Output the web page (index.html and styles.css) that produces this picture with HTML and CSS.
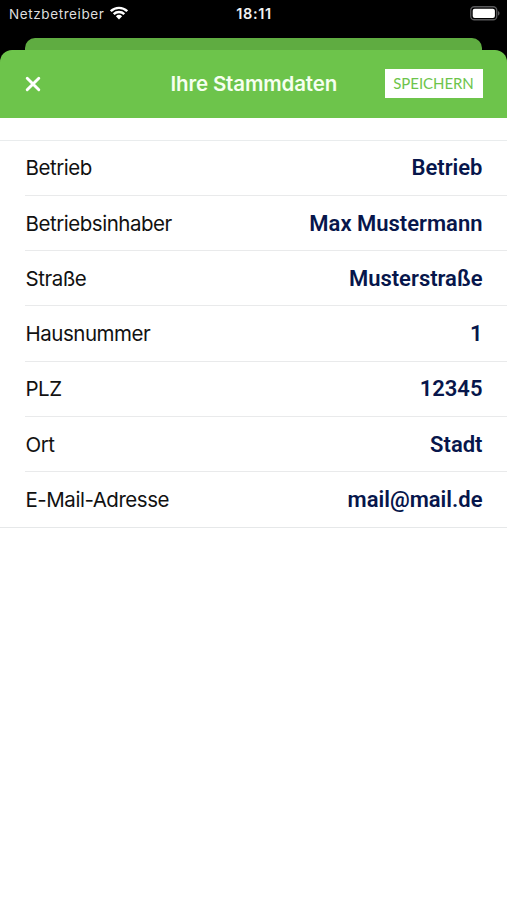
FILE: index.html
```html
<!DOCTYPE html>
<html lang="de">
<head>
<meta charset="utf-8">
<title>Ihre Stammdaten</title>
<link rel="stylesheet" href="styles.css">
</head>
<body>
<div class="status">
  <div class="carrier"><span>Netzbetreiber</span>
    <svg class="wifi" width="18" height="14" viewBox="0 0 18 14" fill="none" stroke="#fff" stroke-width="2.4"><path d="M.8 5.2a11.7 11.7 0 0 1 16.4 0M3.7 8.2a7.6 7.6 0 0 1 10.6 0"/><path d="M9 13.4 5.9 10.3a4.5 4.5 0 0 1 6.2 0z" fill="#fff" stroke="none"/></svg>
  </div>
  <time class="clock">18:11</time>
  <svg class="battery" width="30" height="15" viewBox="0 0 30 15"><rect x=".75" y=".75" width="26" height="13" rx="3.6" fill="none" stroke="#59595b" stroke-width="1.3"/><rect x="2.7" y="2.7" width="22.2" height="9.2" rx="2" fill="#fff"/><path d="M28 5v4.6c2-.8 2-3.8 0-4.6z" fill="#59595b"/></svg>
</div>
<div class="behind"></div>
<main class="sheet">
  <header class="bar">
    <svg class="close" width="16" height="16" viewBox="0 0 16 16" fill="none" stroke="#fff" stroke-width="2.9" stroke-linecap="round"><path d="M2.2 2.2l11.6 11.6M13.8 2.2L2.2 13.8"/></svg>
    <h1>Ihre Stammdaten</h1>
    <button class="save">SPEICHERN</button>
  </header>
  <dl class="list">
    <div class="row"><dt>Betrieb</dt><dd>Betrieb</dd></div>
    <div class="row"><dt>Betriebsinhaber</dt><dd>Max Mustermann</dd></div>
    <div class="row"><dt>Straße</dt><dd>Musterstraße</dd></div>
    <div class="row"><dt>Hausnummer</dt><dd>1</dd></div>
    <div class="row"><dt>PLZ</dt><dd>12345</dd></div>
    <div class="row"><dt>Ort</dt><dd>Stadt</dd></div>
    <div class="row"><dt>E-Mail-Adresse</dt><dd>mail@mail.de</dd></div>
  </dl>
</main>
</body>
</html>
```
FILE: styles.css
```css
* { box-sizing: border-box; }
body { margin: 0; height: 900px; background: #000; overflow: hidden; font-family: Inter, "Liberation Sans", sans-serif; display: flex; flex-direction: column; }
.status { height: 38px; flex: none; display: grid; grid-template-columns: 1fr auto 1fr; padding: 0 7px 11px 9px; align-items: center; color: #dedede; font-size: 13.5px; }
.carrier { display: flex; align-items: center; gap: 6px; letter-spacing: .6px; }
.wifi { margin-top: -2px; }
.clock { color: #f2f2f2; font-weight: 600; font-size: 14.5px; letter-spacing: .65px; margin-right: 1px; }
.battery { justify-self: end; }
.behind { height: 12px; flex: none; margin: 0 25px; background: #5fac41; border-radius: 10px 10px 0 0; }
.sheet { flex: 1; background: linear-gradient(#000 0 20px, #fff 20px); }
.bar { height: 68px; background: #6dc44b; border-radius: 12px 12px 0 0; display: grid; grid-template-columns: 1fr auto 1fr; align-items: center; padding: 0 24.5px 0 25px; }
h1 { margin: 0; color: #f6fff0; font-size: 20.5px; font-weight: 600; letter-spacing: -.15px; line-height: 30px; }
.save { justify-self: end; width: 98px; height: 29px; margin-bottom: 1px; padding: 0 0 1px; border: 0; background: #fff; color: #6dc44b; font: 15px Lato, sans-serif; letter-spacing: -.05px; }
.list { margin: 21.6px 0 0; border-top: 1px solid #e9eced; border-bottom: 1px solid #e6e8e9; }
.row { height: 55.3px; margin-left: 25px; padding: 0 24.5px 0 .5px; display: flex; justify-content: space-between; align-items: center; border-bottom: 1px solid #e9eaeb; }
.row:last-child { height: 54.5px; border-bottom: 0; }
dt { color: #111; font-size: 20.5px; letter-spacing: -.47px; }
dd { margin: 0; color: #07164b; font: 600 22px Roboto, sans-serif; }
```
